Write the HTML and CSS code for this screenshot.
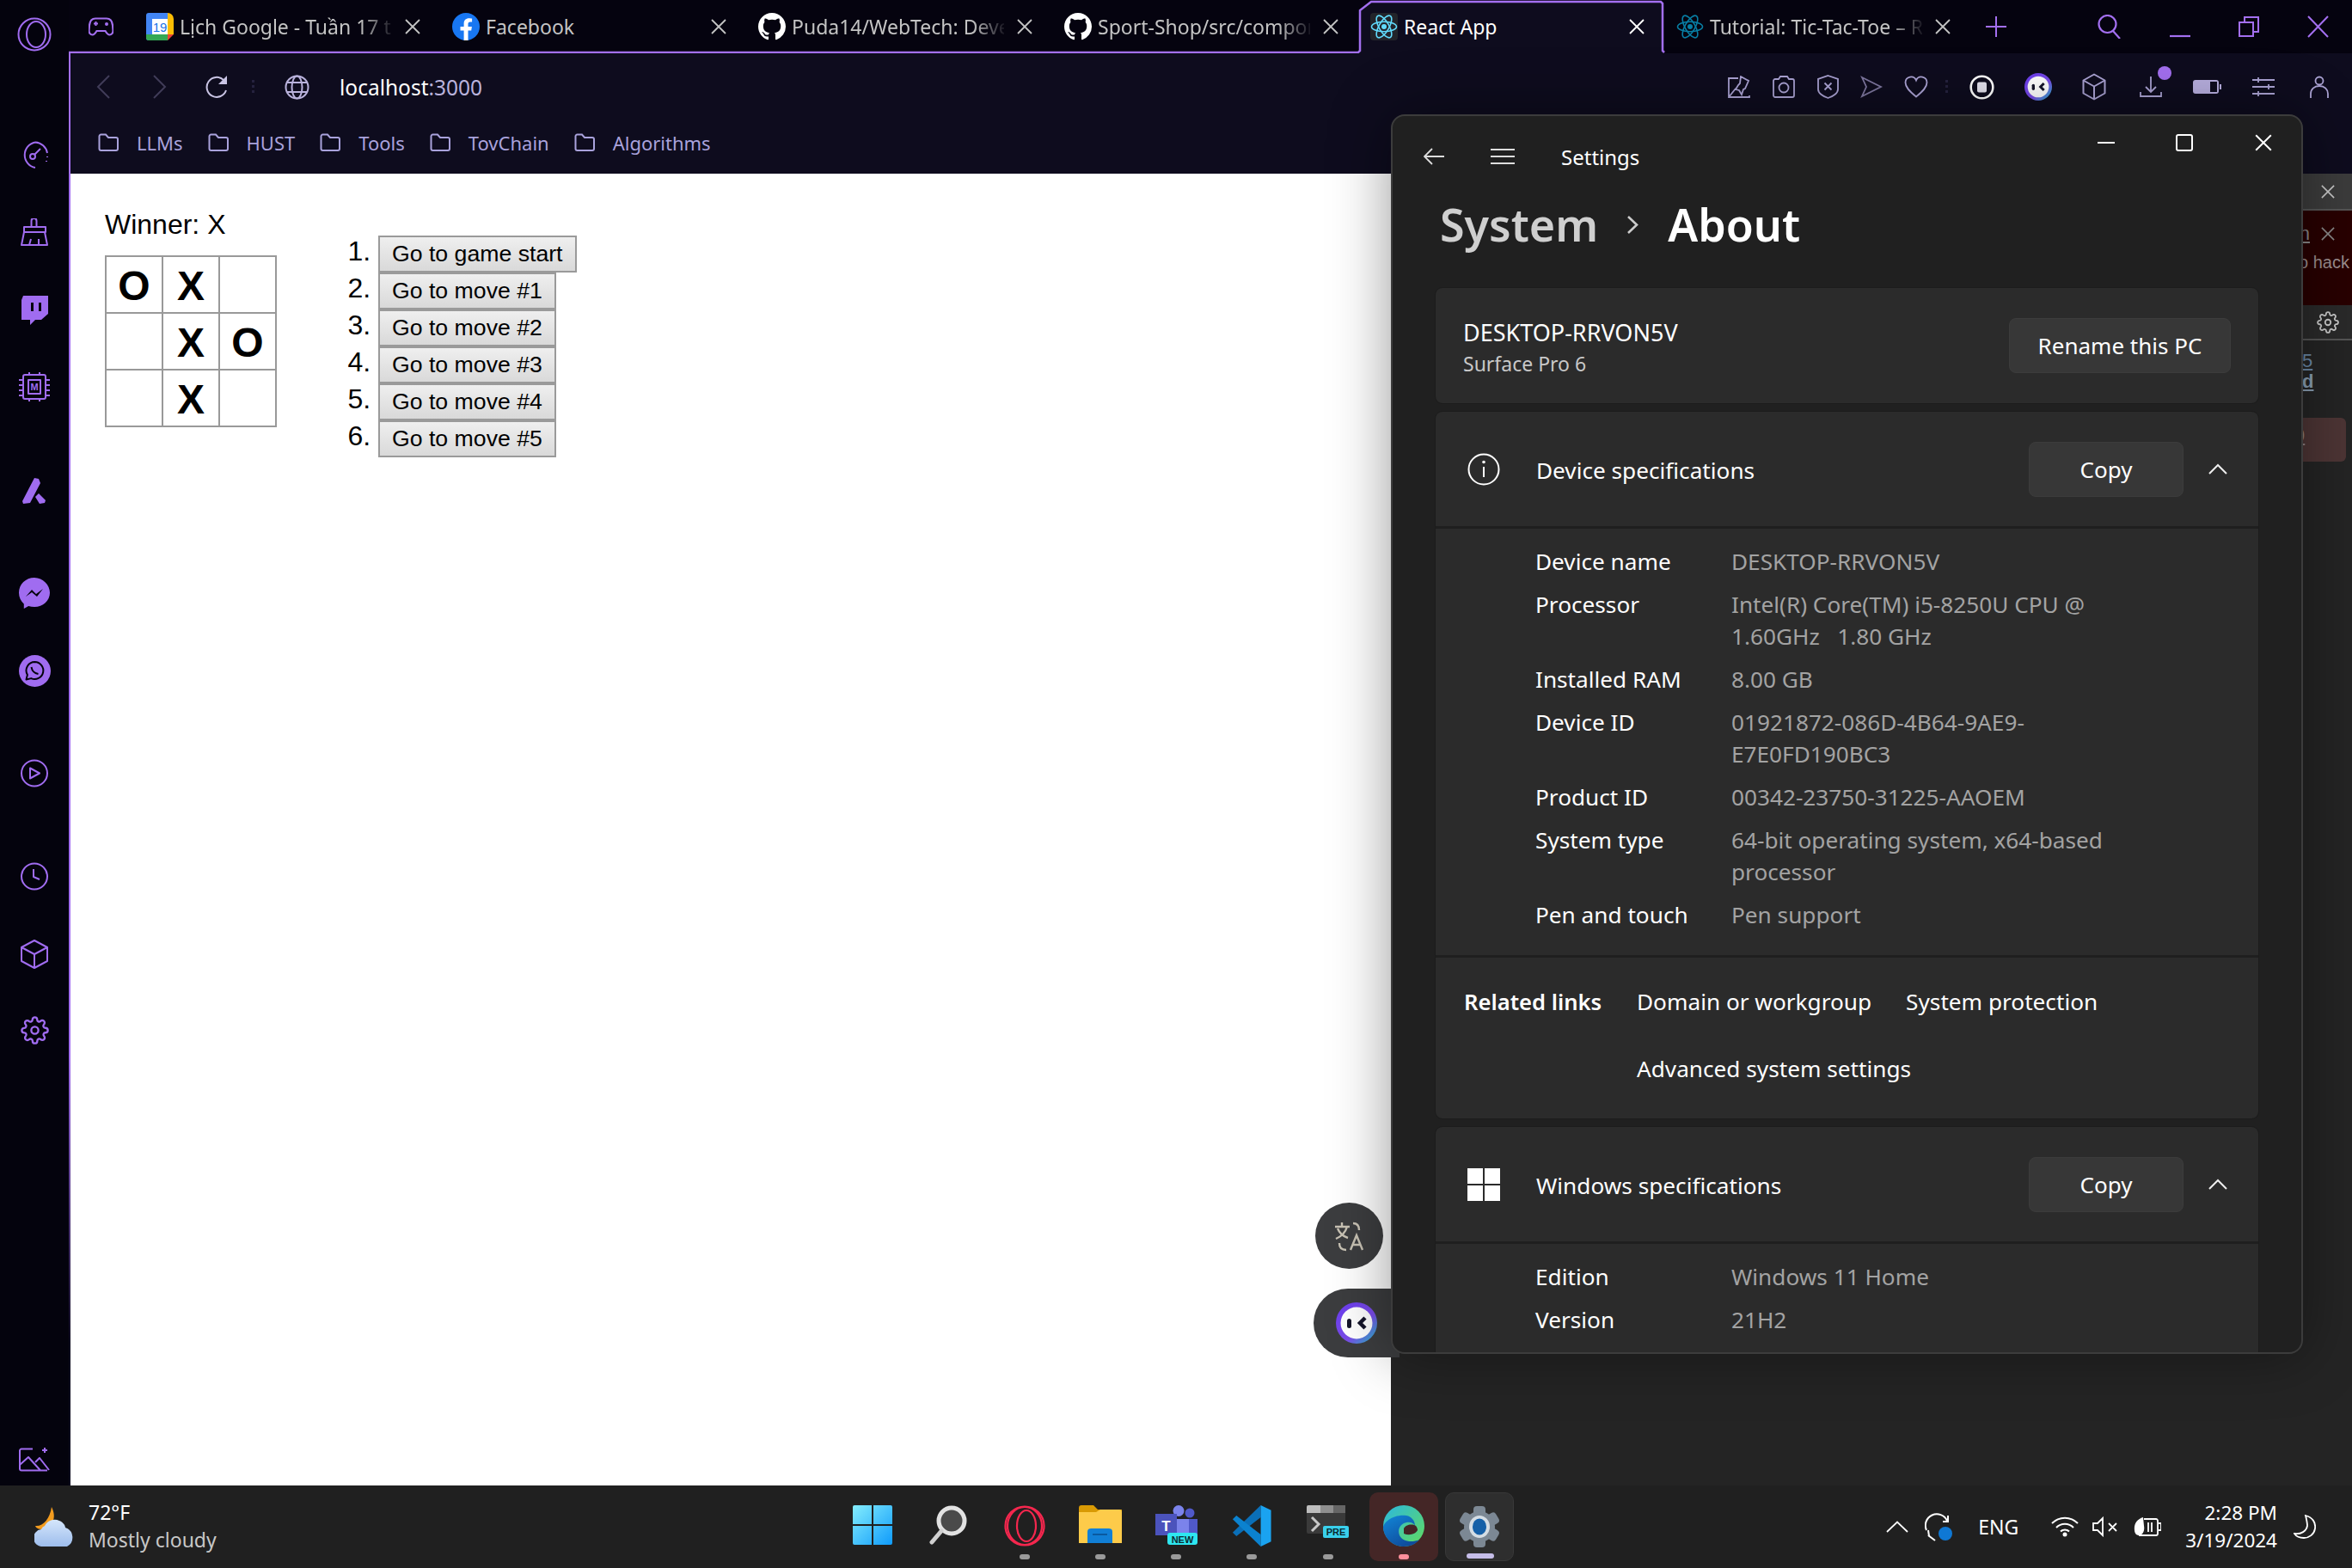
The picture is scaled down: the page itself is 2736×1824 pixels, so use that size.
FILE: index.html
```html
<!DOCTYPE html>
<html lang="en">
<head>
    <meta charset="UTF-8">
    <title>React App</title>
    <link rel="stylesheet" href="styles.css">
</head>
<body>

<svg class="defs" width="0" height="0">
    <symbol id="x" viewBox="0 0 20 18"><path d="M2 1l16 16M18 1L2 17" fill="none" stroke="currentColor" stroke-width="1.8"/></symbol>
    <symbol id="folder" viewBox="0 0 24 22"><path d="M1.5 3.5a2 2 0 0 1 2-2h5.5l3 3.5h9a2 2 0 0 1 2 2v11a2 2 0 0 1-2 2h-17.500a2 2 0 0 1-2-2z" fill="none" stroke="currentColor" stroke-width="2"/></symbol>
    <symbol id="github" viewBox="0 0 16 16"><path fill="#fff" d="M8 0C3.58 0 0 3.58 0 8c0 3.54 2.29 6.53 5.47 7.59.4.07.55-.17.55-.38 0-.19-.01-.82-.01-1.49-2.01.37-2.53-.49-2.69-.94-.09-.23-.48-.94-.82-1.13-.28-.15-.68-.52-.01-.53.63-.01 1.08.58 1.23.82.72 1.21 1.87.87 2.33.66.07-.52.28-.87.51-1.07-1.78-.2-3.64-.89-3.64-3.95 0-.87.31-1.59.82-2.15-.08-.2-.36-1.02.08-2.12 0 0 .67-.21 2.2.82.64-.18 1.32-.27 2-.27.68 0 1.36.09 2 .27 1.53-1.04 2.2-.82 2.2-.82.44 1.1.16 1.92.08 2.12.51.56.82 1.27.82 2.15 0 3.07-1.87 3.75-3.65 3.95.29.25.54.73.54 1.48 0 1.07-.01 1.93-.01 2.2 0 .21.15.46.55.38A8.013 8.013 0 0016 8c0-4.420-3.580-8-8-8z"/></symbol>
    <symbol id="atom" viewBox="0 0 32 32"><g fill="none" stroke="currentColor" stroke-width="1.6"><ellipse cx="16" cy="16" rx="14.500" ry="5.800"/><ellipse cx="16" cy="16" rx="14.500" ry="5.800" transform="rotate(60 16 16)"/><ellipse cx="16" cy="16" rx="14.500" ry="5.800" transform="rotate(120 16 16)"/></g><circle cx="16" cy="16" r="3" fill="currentColor"/></symbol>
    <symbol id="gear" viewBox="0 0 24 24"><g fill="none" stroke="currentColor" stroke-width="1.700" stroke-linejoin="round"><circle cx="12" cy="12" r="3"/><path d="M19.400 15a1.650 1.650 0 0 0 .33 1.820l.06.06a2 2 0 0 1 0 2.830 2 2 0 0 1-2.830 0l-.06-.06a1.650 1.650 0 0 0-1.820-.33 1.650 1.650 0 0 0-1 1.510V21a2 2 0 0 1-2 2 2 2 0 0 1-2-2v-.09A1.650 1.650 0 0 0 9 19.400a1.650 1.650 0 0 0-1.820.33l-.06.06a2 2 0 0 1-2.830 0 2 2 0 0 1 0-2.830l.06-.06a1.650 1.650 0 0 0 .33-1.820 1.650 1.650 0 0 0-1.510-1H3a2 2 0 0 1-2-2 2 2 0 0 1 2-2h.09A1.650 1.650 0 0 0 4.600 9a1.650 1.650 0 0 0-.33-1.820l-.06-.06a2 2 0 0 1 0-2.830 2 2 0 0 1 2.830 0l.06.06a1.650 1.650 0 0 0 1.820.33H9a1.650 1.650 0 0 0 1-1.510V3a2 2 0 0 1 2-2 2 2 0 0 1 2 2v.09a1.650 1.650 0 0 0 1 1.510 1.650 1.650 0 0 0 1.820-.33l.06-.06a2 2 0 0 1 2.830 0 2 2 0 0 1 0 2.830l-.06.06a1.650 1.650 0 0 0-.33 1.820V9a1.650 1.650 0 0 0 1.510 1H21a2 2 0 0 1 2 2 2 2 0 0 1-2 2h-.09a1.650 1.650 0 0 0-1.510 1z"/></g></symbol>
    <symbol id="cube" viewBox="0 0 28 32"><g fill="none" stroke="currentColor" stroke-width="2" stroke-linejoin="round"><path d="M14 1.500L26.500 8.500V23.500L14 30.500L1.500 23.500V8.500z"/><path d="M1.500 8.500L14 15.500L26.500 8.500M14 15.500V30.500"/></g></symbol>
    <symbol id="aria" viewBox="0 0 48 48"><defs><linearGradient id="ariaRim" x1="0" y1="0" x2="1" y2="1"><stop offset="0" stop-color="#6a3cf0"/><stop offset=".6" stop-color="#7a4ce8"/><stop offset="1" stop-color="#22c1c8"/></linearGradient></defs><circle cx="24" cy="24" r="24" fill="url(#ariaRim)"/><circle cx="24" cy="24" r="18.500" fill="#fff"/><rect x="13" y="19" width="5" height="11" rx="2.500" fill="#15152a"/><path d="M34 18l-6 6 6 6" fill="none" stroke="#15152a" stroke-width="4.500"/></symbol>
</svg>

<div class="desktop">
    <aside class="rail">
        <svg class="rail-opera" width="40" height="40" viewBox="0 0 40 40"><circle cx="20" cy="20" r="18.500"/><ellipse cx="22" cy="20" rx="11" ry="15"/></svg>
        <svg class="rail-speed" width="33" height="32" viewBox="0 0 33 32"><path d="M17 1.500A15 15 0 0 0 17 31M17 1.500A15 15 0 0 1 31 14"/><circle cx="14" cy="18" r="3"/><path d="M16 16l7-7M31 18v1M30 23v1"/></svg>
        <svg class="rail-brush" width="32" height="32" viewBox="0 0 32 32"><path d="M12.500 10V3a3 3 0 0 1 6 0v7M4 10h25v6H4zM4 16l-3 15h30l-3-15M10 31l2-7M21 31v-7"/></svg>
        <svg class="rail-twitch" width="32" height="34" viewBox="0 0 32 34"><path class="fill" d="M3 0H32V21L24 28H17L11 34V28H1V5z"/><rect class="cut" x="12" y="8" width="3" height="10"/><rect class="cut" x="21" y="8" width="3" height="10"/></svg>
        <svg class="rail-chip" width="38" height="34" viewBox="0 0 38 34"><rect x="6" y="3" width="26" height="28" rx="2"/><rect x="12" y="9" width="14" height="16"/><path d="M1 9h5M1 15h5M1 21h5M1 27h5M32 9h5M32 15h5M32 21h5M32 27h5M13 0v3M25 0v3M13 31v3M25 31v3"/><text x="19" y="21" class="chip-m">M</text></svg>
        <svg class="rail-a" width="30" height="32" viewBox="0 0 30 32"><path class="fill" d="M15 1l5 1 2 5L10 30l-8 1-1-3zM20 19l8 8-1 3-6 1-5-8z"/></svg>
        <svg class="rail-msg" width="36" height="36" viewBox="0 0 36 36"><path class="fill" d="M18 0C8 0 0 7.500 0 17.500c0 5.300 2.200 9.800 5.800 13V36l5.400-3c2.100.700 4.400 1 6.800 1 10 0 18-7.500 18-16.500S28 0 18 0z"/><path class="wave" d="M8 22l7-8 5 5 8-6-7 9-6-5z"/></svg>
        <svg class="rail-wa" width="37" height="37" viewBox="0 0 37 37"><circle class="fill" cx="18.500" cy="18.500" r="18.500"/><path class="bubble" d="M18.500 8a10 10 0 0 0-8.600 15L8.500 28.500l5.700-1.400A10 10 0 1 0 18.500 8z"/><path class="bubble" d="M14.500 14c1 5 3 7 8 8"/></svg>
        <svg class="rail-play" width="32" height="33" viewBox="0 0 32 33"><circle cx="16" cy="16.500" r="15"/><path d="M11 10.500l11 6-11 6z"/></svg>
        <svg class="rail-clock" width="32" height="33" viewBox="0 0 32 33"><circle cx="16" cy="16.500" r="15"/><path d="M15 8v9l7 3"/></svg>
        <svg class="rail-cube" width="32" height="34" viewBox="0 0 32 34"><path d="M16 1L31 9V25L16 33L1 25V9zM1 9L16 17L31 9M16 17V33"/></svg>
        <svg class="rail-gear" width="33" height="33"><use href="#gear"/></svg>
        <svg class="rail-gallery" width="36" height="28" viewBox="0 0 36 28"><path d="M16 1.500H3a2 2 0 0 0-2 2v21a2 2 0 0 0 2 2h30M1 20l10-9 14 15.500M19 17l5-5 11 14M27 3h6M30 0v6"/></svg>
    </aside>

    <div class="browser">
        <div class="tabstrip">
            <svg class="tab-outline" width="2656" height="62" viewBox="0 0 2656 62">
                <defs><linearGradient id="tabFade"><stop offset="0" stop-color="#a36ff0"/><stop offset="1" stop-color="#a36ff0" stop-opacity="0"/></linearGradient></defs>
                <path d="M1502 62V12L1515 2H1852L1854 4V62z" fill="#0e0c1e"/>
                <path d="M0 61H1500L1502 59V12L1515 2H1852L1854 4V59L1856 61" fill="none" stroke="#a36ff0" stroke-width="2.500"/>
                <path d="M1856 61H2240" fill="none" stroke="url(#tabFade)" stroke-width="2.500"/>
            </svg>
            <svg class="tab-game" width="29" height="22" viewBox="0 0 29 22"><path d="M8 1.500h13c4 0 6.500 3 7 8l.5 6c.2 3-2 5-4 5-2 0-3.500-2-5-4.500h-10c-1.500 2.500-3 4.500-5 4.500s-4.200-2-4-5l.5-6c.5-5 3-8 7-8z" fill="none" stroke="#a36ff0" stroke-width="2.200"/><path d="M6 7.500h5M8.500 5v5" stroke="#a36ff0" stroke-width="2"/><circle cx="21" cy="8" r="2" fill="#a36ff0"/></svg>
            <div class="tab">
                <svg width="32" height="32" viewBox="0 0 32 32"><path d="M3 0h22v32H3a3 3 0 0 1-3-3V3a3 3 0 0 1 3-3z" fill="#4285f4"/><path d="M25 0a7 7 0 0 1 7 7v18h-7z" fill="#fbbc04"/><path d="M0 25h25v7H3a3 3 0 0 1-3-3z" fill="#34a853"/><path d="M25 25h7l-7 7z" fill="#ea4335"/><rect x="7" y="7" width="18" height="18" fill="#fff"/><text x="16" y="22" class="cal-day">19</text></svg>
                <span class="tab-title fade">Lịch Google - Tuần 17 t</span>
                <svg class="tab-close" width="20" height="18"><use href="#x"/></svg>
            </div>
            <div class="tab">
                <svg width="32" height="32" viewBox="0 0 32 32"><circle cx="16" cy="16" r="16" fill="#1877f2"/><path d="M22.200 20.600l.7-4.600h-4.400v-3c0-1.300.6-2.500 2.600-2.500h2V6.600s-1.800-.3-3.500-.3c-3.600 0-6 2.200-6 6.200V16H9.500v4.600h4.100V32h4.900V20.600z" fill="#fff"/></svg>
                <span class="tab-title">Facebook</span>
                <svg class="tab-close" width="20" height="18"><use href="#x"/></svg>
            </div>
            <div class="tab">
                <svg width="32" height="32"><use href="#github"/></svg>
                <span class="tab-title fade">Puda14/WebTech: Deve</span>
                <svg class="tab-close" width="20" height="18"><use href="#x"/></svg>
            </div>
            <div class="tab">
                <svg width="32" height="32"><use href="#github"/></svg>
                <span class="tab-title fade">Sport-Shop/src/compon</span>
                <svg class="tab-close" width="20" height="18"><use href="#x"/></svg>
            </div>
            <div class="tab tab-active">
                <svg class="tile-react" width="32" height="32"><use href="#atom"/></svg>
                <span class="tab-title">React App</span>
                <svg class="tab-close" width="20" height="18"><use href="#x"/></svg>
            </div>
            <div class="tab">
                <svg class="tile-tutorial" width="32" height="32"><use href="#atom"/></svg>
                <span class="tab-title fade">Tutorial: Tic-Tac-Toe – R</span>
                <svg class="tab-close" width="20" height="18"><use href="#x"/></svg>
            </div>
            <svg class="tab-plus" width="24" height="24" viewBox="0 0 24 24"><path d="M12 0v24M0 12h24" stroke="#a36ff0" stroke-width="2"/></svg>
            <div class="win-buttons">
                <svg width="28" height="28" viewBox="0 0 28 28"><circle cx="11.500" cy="11" r="10" fill="none" stroke="#a36ff0" stroke-width="2.200"/><path d="M18 19l8 9" stroke="#a36ff0" stroke-width="2.200"/></svg>
                <svg width="24" height="26" viewBox="0 0 24 26"><path d="M0 24h24" stroke="#a36ff0" stroke-width="2.200"/></svg>
                <svg width="24" height="24" viewBox="0 0 24 24"><path d="M7 6V1h16v17h-6M1 7h16v16H1z" fill="none" stroke="#a36ff0" stroke-width="2"/></svg>
                <svg width="25" height="26" viewBox="0 0 25 26"><path d="M1 1l23 24M24 1L1 25" stroke="#a36ff0" stroke-width="2"/></svg>
            </div>
        </div>

        <div class="chrome">
            <div class="toolbar">
                <svg class="nav-back" width="16" height="28" viewBox="0 0 16 28"><path d="M15 1L2 14l13 13" fill="none" stroke="#403c58" stroke-width="2"/></svg>
                <svg class="nav-forward" width="16" height="28" viewBox="0 0 16 28"><path d="M1 1l13 13L1 27" fill="none" stroke="#403c58" stroke-width="2"/></svg>
                <svg class="nav-reload" width="28" height="26" viewBox="0 0 28 26"><path d="M22 5A11.500 11.500 0 1 0 25 17" fill="none" stroke="#c9c4e4" stroke-width="2"/><path d="M26 0v10H16z" fill="#c9c4e4"/></svg>
                <span class="tool-dots"></span>
                <svg class="nav-globe" width="29" height="29" viewBox="0 0 29 29"><g fill="none" stroke="#b9b2dc" stroke-width="2"><circle cx="14.500" cy="14.500" r="13"/><ellipse cx="14.500" cy="14.500" rx="6" ry="13"/><path d="M3 9h23M3 20h23"/></g></svg>
                <span class="address"><b>localhost</b>:3000</span>
                <div class="tools">
                    <span class="tool"><svg width="26" height="26" viewBox="0 0 26 26"><path d="M12 3H1v22h24v-2M1 25l8-10M15 1l9 5-4 9-2 1-2 6-3-5-4-1 3-5 2-2z" fill="none" stroke="#aba3d4" stroke-width="1.800"/></svg></span>
                    <span class="tool"><svg width="26" height="26" viewBox="0 0 26 26"><path d="M1 6a2 2 0 0 1 2-2h4l2-3h8l2 3h4a2 2 0 0 1 2 2v17a2 2 0 0 1-2 2H3a2 2 0 0 1-2-2z" fill="none" stroke="#aba3d4" stroke-width="1.800"/><circle cx="13" cy="14" r="5.500" fill="none" stroke="#aba3d4" stroke-width="1.800"/></svg></span>
                    <span class="tool"><svg width="25" height="28" viewBox="0 0 25 28"><path d="M12.500 1L24 5v12c0 4-5 8-11.500 10C6 25 1 21 1 17V5zM8.500 9.500l8 8M16.500 9.500l-8 8" fill="none" stroke="#aba3d4" stroke-width="1.800"/></svg></span>
                    <span class="tool"><svg width="26" height="26" viewBox="0 0 26 26"><path d="M2 2l22 11L2 24l5-11z" fill="none" stroke="#7e779f" stroke-width="1.800"/></svg></span>
                    <span class="tool"><svg width="28" height="26" viewBox="0 0 28 26"><path d="M14 24.500C6 18 1.500 13.500 1.500 8A6.500 6.500 0 0 1 14 5.500 6.500 6.500 0 0 1 26.500 8c0 5.500-4.500 10-12.500 16.500z" fill="none" stroke="#aba3d4" stroke-width="1.800"/></svg></span>
                </div>
                <span class="tool-dots tool-dots-right"></span>
                <div class="tools tools-wide">
                    <span class="tool"><svg width="29" height="29" viewBox="0 0 29 29"><circle cx="14.500" cy="14.500" r="12.800" fill="none" stroke="#fff" stroke-width="2.600"/><rect x="9" y="8.500" width="11" height="12" rx="2" fill="#e4e2ee"/></svg></span>
                    <span class="tool"><svg width="32" height="32"><use href="#aria"/></svg></span>
                    <span class="tool"><svg class="tool-ink" width="28" height="32"><use href="#cube"/></svg></span>
                    <span class="tool badge-host"><svg width="26" height="26" viewBox="0 0 26 26"><path d="M13 1v18M7 13l6 6 6-6M1 19v5h24v-5" fill="none" stroke="#aba3d4" stroke-width="1.800"/></svg><i class="dl-dot"></i></span>
                    <span class="tool"><svg width="33" height="16" viewBox="0 0 33 16"><rect x="0" y="0" width="30" height="16" rx="3" fill="#b7aede"/><rect x="20" y="2" width="8" height="12" fill="#0e0c1e"/><rect x="31" y="5" width="2" height="6" fill="#b7aede"/></svg></span>
                    <span class="tool"><svg width="26" height="22" viewBox="0 0 26 22"><path d="M0 3h26M0 11h26M0 19h26M7 0v6M19 8v6M7 16v6" stroke="#aba3d4" stroke-width="1.800"/></svg></span>
                    <span class="tool"><svg width="22" height="26" viewBox="0 0 22 26"><circle cx="11" cy="6" r="4.500" fill="none" stroke="#aba3d4" stroke-width="1.800"/><path d="M1 26v-5c0-5 4-9 10-9s10 4 10 9v5" fill="none" stroke="#aba3d4" stroke-width="1.800"/></svg></span>
                </div>
            </div>

            <div class="bookmarks">
                <div class="bookmark"><svg width="24" height="22"><use href="#folder"/></svg>LLMs</div>
                <div class="bookmark"><svg width="24" height="22"><use href="#folder"/></svg>HUST</div>
                <div class="bookmark"><svg width="24" height="22"><use href="#folder"/></svg>Tools</div>
                <div class="bookmark"><svg width="24" height="22"><use href="#folder"/></svg>TovChain</div>
                <div class="bookmark"><svg width="24" height="22"><use href="#folder"/></svg>Algorithms</div>
            </div>

            <div class="viewport">
                <main class="page">
                    <div class="game">
                        <div class="game-board">
                            <div class="status">Winner: X</div>
                            <div class="board-row"><button class="square">O</button><button class="square">X</button><button class="square"></button></div>
                            <div class="board-row"><button class="square"></button><button class="square">X</button><button class="square">O</button></div>
                            <div class="board-row"><button class="square"></button><button class="square">X</button><button class="square"></button></div>
                        </div>
                        <ol class="game-info">
                            <li><button class="move">Go to game start</button></li>
                            <li><button class="move">Go to move #1</button></li>
                            <li><button class="move">Go to move #2</button></li>
                            <li><button class="move">Go to move #3</button></li>
                            <li><button class="move">Go to move #4</button></li>
                            <li><button class="move">Go to move #5</button></li>
                        </ol>
                    </div>
                </main>
                <div class="devtools">
                    <div class="dev-top"><svg width="18" height="16" viewBox="0 0 20 18"><use href="#x"/></svg></div>
                    <div class="dev-error">
                        <div class="dev-error-first"><u>n</u><svg width="18" height="16" viewBox="0 0 20 18"><use href="#x"/></svg></div>
                        <div class="dev-error-text">o hack</div>
                    </div>
                    <div class="dev-gear"><svg width="26" height="26"><use href="#gear"/></svg></div>
                    <div class="dev-body">
                        <div class="dev-link">5</div>
                        <div class="dev-link dev-bold">d</div>
                        <div class="dev-pill"><u>9</u></div>
                    </div>
                </div>
            </div>
        </div>
    </div>

    <button class="float-translate"><svg width="36" height="36" viewBox="0 0 36 36"><g fill="none" stroke="#c8c2b4" stroke-width="2.400"><path d="M1 7h17M9 2v5M15 7c-2 7-6 11-13 14M4 9c2 5 6 9 12 11M22 3c4 0 7 2 7 8M14 34c-6 0-8-3-8-8"/><path d="M19 34l7-17 7 17M21.500 28h9"/></g></svg></button>
    <button class="float-aria"><svg width="48" height="48"><use href="#aria"/></svg></button>

    <section class="settings">
        <div class="settings-bar">
            <svg class="set-back" width="24" height="20" viewBox="0 0 24 20"><path d="M10 1L1 10l9 9M1 10h23" fill="none" stroke="#ddd" stroke-width="1.800"/></svg>
            <svg class="set-menu" width="28" height="20" viewBox="0 0 28 20"><path d="M0 2h28M0 10h28M0 18h28" stroke="#ddd" stroke-width="2"/></svg>
            <span class="set-name">Settings</span>
            <div class="set-controls">
                <svg width="20" height="20" viewBox="0 0 20 20"><path d="M0 10h20" stroke="#fff" stroke-width="2"/></svg>
                <svg width="20" height="20" viewBox="0 0 20 20"><rect x="1" y="1" width="18" height="18" rx="2" fill="none" stroke="#fff" stroke-width="2"/></svg>
                <svg width="22" height="20"><use href="#x"/></svg>
            </div>
        </div>
        <h1 class="set-title"><span class="crumb">System</span><svg width="15" height="21" viewBox="0 0 15 21"><path d="M2 1l10 9.500L2 20" fill="none" stroke="#ccc" stroke-width="2.600"/></svg><span>About</span></h1>
        <div class="set-scroll">
            <div class="card card-pc">
                <div class="pc-name">
                    <div class="pc-host">DESKTOP-RRVON5V</div>
                    <div class="pc-model">Surface Pro 6</div>
                </div>
                <button class="set-btn btn-rename">Rename this PC</button>
            </div>

            <div class="card">
                <div class="spec-head">
                    <svg class="spec-icon" width="40" height="38" viewBox="0 0 40 38"><circle cx="20" cy="19" r="17.500" fill="none" stroke="#fff" stroke-width="2"/><path d="M20 16v12" stroke="#fff" stroke-width="2"/><circle cx="20" cy="10.500" r="1.800" fill="#fff"/></svg>
                    <span class="spec-title">Device specifications</span>
                    <button class="set-btn btn-copy">Copy</button>
                    <svg class="spec-chevron" width="22" height="13" viewBox="0 0 22 13"><path d="M1 12L11 2l10 10" fill="none" stroke="#eee" stroke-width="2"/></svg>
                </div>
                <div class="spec-body">
                    <div class="spec-row"><span>Device name</span><span class="spec-val">DESKTOP-RRVON5V</span></div>
                    <div class="spec-row"><span>Processor</span><span class="spec-val">Intel(R) Core(TM) i5-8250U CPU @<br>1.60GHz &nbsp; 1.80 GHz</span></div>
                    <div class="spec-row"><span>Installed RAM</span><span class="spec-val">8.00 GB</span></div>
                    <div class="spec-row"><span>Device ID</span><span class="spec-val">01921872-086D-4B64-9AE9-<br>E7E0FD190BC3</span></div>
                    <div class="spec-row"><span>Product ID</span><span class="spec-val">00342-23750-31225-AAOEM</span></div>
                    <div class="spec-row"><span>System type</span><span class="spec-val">64-bit operating system, x64-based<br>processor</span></div>
                    <div class="spec-row"><span>Pen and touch</span><span class="spec-val">Pen support</span></div>
                </div>
                <div class="related">
                    <b class="related-label">Related links</b>
                    <div class="related-links">
                        <span>Domain or workgroup</span>
                        <span>System protection</span>
                        <span>Advanced system settings</span>
                    </div>
                </div>
            </div>

            <div class="card">
                <div class="spec-head">
                    <svg class="spec-icon" width="40" height="40" viewBox="0 0 40 40"><path d="M1 1h18v18H1zM21 1h18v18H21zM1 21h18v18H1zM21 21h18v18H21z" fill="#fff"/></svg>
                    <span class="spec-title">Windows specifications</span>
                    <button class="set-btn btn-copy">Copy</button>
                    <svg class="spec-chevron" width="22" height="13" viewBox="0 0 22 13"><path d="M1 12L11 2l10 10" fill="none" stroke="#eee" stroke-width="2"/></svg>
                </div>
                <div class="spec-body">
                    <div class="spec-row"><span>Edition</span><span class="spec-val">Windows 11 Home</span></div>
                    <div class="spec-row"><span>Version</span><span class="spec-val">21H2</span></div>
                </div>
            </div>
        </div>
    </section>
</div>

<footer class="taskbar">
    <div class="weather">
        <svg width="48" height="46" viewBox="0 0 48 46">
            <defs><linearGradient id="cloud" x1="0" y1="0" x2="0" y2="1"><stop offset="0" stop-color="#d5e6fb"/><stop offset="1" stop-color="#9dbdec"/></linearGradient></defs>
            <path d="M20 0c3 6 4 12 1 18-2 5-7 8-12 8-3 0-7-1-8-4 9 1 17-8 19-22z" fill="#f39c1f"/>
            <path d="M10 46a10 10 0 0 1-2-20 8 8 0 0 1 4-4 13 13 0 0 1 17-6c5 2 7 6 7 8a12 12 0 0 1 2 22z" fill="url(#cloud)"/>
        </svg>
        <div class="weather-text">
            <div>72°F</div>
            <div class="weather-sub">Mostly cloudy</div>
        </div>
    </div>

    <div class="apps">
        <div class="app">
            <svg width="46" height="46" viewBox="0 0 46 46"><defs><linearGradient id="start" x1="0" y1="0" x2="1" y2="1"><stop offset="0" stop-color="#84edfd"/><stop offset="1" stop-color="#0f9bfb"/></linearGradient></defs><path d="M0 2a2 2 0 0 1 2-2h20v22H0zM24 0h20a2 2 0 0 1 2 2v20H24zM0 24h22v22H2a2 2 0 0 1-2-2zM24 24h22v20a2 2 0 0 1-2 2H24z" fill="url(#start)"/></svg>
        </div>
        <div class="app">
            <svg width="44" height="46" viewBox="0 0 44 46"><circle cx="26" cy="18" r="15" fill="#4a4a4a" stroke="#e2e2e2" stroke-width="5"/><path d="M14 30L3 43" stroke="#d0d0d0" stroke-width="5" stroke-linecap="round"/></svg>
        </div>
        <div class="app">
            <svg width="48" height="48" viewBox="0 0 48 48"><g fill="none" stroke="#f5274e" stroke-width="2.200"><circle cx="24" cy="24" r="22.500"/><ellipse cx="24" cy="24" rx="20" ry="22"/><ellipse cx="26" cy="24" rx="11" ry="18"/></g></svg>
            <i class="app-dot"></i>
        </div>
        <div class="app">
            <svg width="50" height="44" viewBox="0 0 50 44"><path d="M0 3a3 3 0 0 1 3-3h14l5 5h28v8H0z" fill="#d99a04"/><path d="M0 8h20l5-3h22a3 3 0 0 1 3 3v36H0z" fill="#fdcb4a"/><path d="M10 44V31a4 4 0 0 1 4-4h21a4 4 0 0 1 4 4v13z" fill="#117fd6"/><path d="M16 34h17" stroke="#0a5aa0" stroke-width="2"/></svg>
            <i class="app-dot"></i>
        </div>
        <div class="app">
            <svg width="49" height="46" viewBox="0 0 49 46"><circle cx="27" cy="6.500" r="6.500" fill="#7b83eb"/><circle cx="40" cy="9" r="5.500" fill="#5059c9"/><path d="M34 16h15v22H34z" fill="#5059c9"/><path d="M18 16h21v26H18z" fill="#7b83eb"/><rect y="10" width="25" height="25" fill="#4b53bc"/><text x="12.500" y="30" class="teams-t">T</text><rect x="14" y="32" width="35" height="14" rx="3" fill="#2ee6f0"/><text x="31.500" y="43.500" class="app-tag">NEW</text></svg>
            <i class="app-dot"></i>
        </div>
        <div class="app">
            <svg width="49" height="48" viewBox="0 0 100 100"><path d="M3 66l9 9 59-46V0z" fill="#0a6fb8"/><path d="M3 34l9-9 59 46v29z" fill="#0b82cf"/><path d="M71 0l25 12v76l-25 12z" fill="#1aa3f0"/></svg>
            <i class="app-dot"></i>
        </div>
        <div class="app">
            <svg width="49" height="38" viewBox="0 0 49 38"><rect width="45" height="33" rx="2" fill="#3a3a3a"/><path d="M0 2a2 2 0 0 1 2-2h14v9H0z" fill="#bdbdbd"/><rect x="16" width="15" height="9" fill="#8f8f8f"/><rect x="31" width="14" height="9" fill="#666"/><path d="M6 14l8 8-8 8" fill="none" stroke="#c8c8c8" stroke-width="3"/><rect x="19" y="24" width="30" height="14" rx="2" fill="#39d0ec"/><text x="34" y="35" class="app-tag">PRE</text></svg>
            <i class="app-dot"></i>
        </div>
        <div class="app app-edge">
            <svg width="48" height="48" viewBox="0 0 48 48">
                <defs><linearGradient id="edgeTop" x1="0" y1="0" x2="1" y2="1"><stop offset="0" stop-color="#2bb7e0"/><stop offset="1" stop-color="#62dc5c"/></linearGradient><linearGradient id="edgeLow" x1="0" y1="0" x2=".6" y2="1"><stop offset="0" stop-color="#1187d8"/><stop offset="1" stop-color="#0f4c9c"/></linearGradient></defs>
                <circle cx="24" cy="24" r="24" fill="url(#edgeTop)"/>
                <path d="M27 12C12 10 0 20 0 26c1 13 12 22 24 22 8 0 14-3 18-8-9 4-20 2-23-5-3-8 2-14 8-15 5-1 9 1 10 4 0-6-4-11-10-12z" fill="url(#edgeLow)"/>
                <path d="M24 27c2-4 9-6 14-3 1 1 2 3 2 5-2 4-9 7-16 4z" fill="#442626"/>
            </svg>
            <i class="app-dot dot-edge"></i>
        </div>
        <div class="app app-settings">
            <svg width="48" height="48" viewBox="0 0 48 48"><g fill="#7c8894"><rect x="17" y="0" width="14" height="48" rx="4"/><rect x="17" y="0" width="14" height="48" rx="4" transform="rotate(60 24 24)"/><rect x="17" y="0" width="14" height="48" rx="4" transform="rotate(120 24 24)"/><circle cx="24" cy="24" r="18"/></g><ellipse cx="24" cy="24" rx="12" ry="13" fill="#d5dde4"/><ellipse cx="24" cy="24" rx="8" ry="9.500" fill="#1560a8"/></svg>
            <i class="app-dot dot-active"></i>
        </div>
    </div>

    <div class="tray">
        <svg class="tray-up" width="26" height="14" viewBox="0 0 26 14"><path d="M1 13L13 1.500 25 13" fill="none" stroke="#fff" stroke-width="1.800"/></svg>
        <svg class="tray-sync" width="32" height="33" viewBox="0 0 32 33"><path d="M2 20A13 13 0 0 1 26 9M21 10h6V3M5 27l-1-7" fill="none" stroke="#fff" stroke-width="2"/><path d="M4 26l8 6" fill="none" stroke="#fff" stroke-width="2"/><circle cx="24" cy="24" r="8" fill="#0f78d4"/></svg>
        <span class="tray-lang">ENG</span>
        <svg class="tray-wifi" width="32" height="24" viewBox="0 0 32 24"><g fill="none" stroke="#fff" stroke-width="2"><path d="M1 8a21 21 0 0 1 30 0M6 13a14 14 0 0 1 20 0M11 17.500a7 7 0 0 1 10 0"/></g><circle cx="16" cy="21" r="2.500" fill="#fff"/></svg>
        <svg class="tray-sound" width="30" height="24" viewBox="0 0 30 24"><path d="M1 8h5l6-6v20l-6-6H1zM19 8l9 9M28 8l-9 9" fill="none" stroke="#fff" stroke-width="1.800"/></svg>
        <svg class="tray-power" width="32" height="24" viewBox="0 0 32 24"><path d="M6 22h20a2 2 0 0 0 2-2V5a2 2 0 0 0-2-2H12M17 7v11M21 7v11M29 8h3v8h-3" fill="none" stroke="#fff" stroke-width="1.800"/><path d="M11 1C4 3 0 9 1 16c0 3 2 6 5 6 5 0 7-6 6-11z" fill="#fff"/></svg>
        <div class="clock">
            <div>2:28 PM</div>
            <div>3/19/2024</div>
        </div>
        <svg class="tray-moon" width="26" height="28" viewBox="0 0 26 28"><path d="M14 1c8 2 12 8 11 15-1 7-7 11-13 11-5 0-9-2-11-5 8 1 14-3 15-9 0-4-1-8-2-12z" fill="none" stroke="#fff" stroke-width="1.800"/></svg>
    </div>
</footer>

</body>
</html>
```

FILE: styles.css
```css
* {
    box-sizing: border-box;
}
body {
    margin: 0;
    width: 2736px;
    height: 1824px;
    overflow: hidden;
    background: #202020;
    font-family: "Noto Sans", "Open Sans", sans-serif;
    color: #fff;
    display: flex;
    flex-direction: column;
}
button {
    font-family: inherit;
}
.defs {
    position: absolute;
}
.desktop {
    position: relative;
    height: 1728px;
    display: flex;
}

/* left rail */
.rail {
    width: 80px;
    flex: none;
    background: #04030d;
    display: flex;
    flex-direction: column;
    align-items: center;
}
.rail svg {
    flex: none;
    fill: none;
    stroke: #a06cf0;
    stroke-width: 2;
    stroke-linejoin: round;
}
.rail svg .fill {
    fill: #a06cf0;
    stroke: none;
}
.rail svg .cut {
    fill: #04030d;
    stroke: none;
}
.rail svg .wave {
    fill: #04030d;
    stroke: none;
}
.rail svg .bubble {
    stroke: #04030d;
}
.chip-m {
    font: bold 11px "Liberation Sans", sans-serif;
    fill: #a06cf0;
    stroke: none;
    text-anchor: middle;
}
.rail-opera { margin-top: 20px; }
.rail-speed { margin-top: 104px; }
.rail-brush { margin-top: 58px; }
.rail-twitch { margin-top: 58px; }
.rail-chip { margin-top: 55px; }
.rail-a { margin-top: 88px; }
.rail-msg { margin-top: 85px; }
.rail-wa { margin-top: 54px; }
.rail-play { margin-top: 84px; }
.rail-clock { margin-top: 87px; }
.rail-cube { margin-top: 57px; }
.rail-gear { margin-top: 55px; color: #a06cf0; }
.rail-gallery { margin-top: auto; margin-bottom: 16px; }

/* browser */
.browser {
    flex: 1;
    min-width: 0;
    display: flex;
    flex-direction: column;
    background: #05030f;
}
.tabstrip {
    position: relative;
    height: 62px;
    flex: none;
    display: flex;
    align-items: center;
}
.tab-outline {
    position: absolute;
    left: 0;
    top: 0;
}
.tab-game {
    position: relative;
    margin-left: 23px;
    margin-right: 38px;
}
.tab {
    position: relative;
    width: 320px;
    margin-right: 36px;
    display: flex;
    align-items: center;
    gap: 7px;
    font-size: 23px;
    color: #c4c4c4;
}
.tab svg {
    flex: none;
}
.tab-title {
    flex: 1;
    overflow: hidden;
    white-space: nowrap;
}
.fade {
    -webkit-mask-image: linear-gradient(to right, #000 85%, rgba(0, 0, 0, 0.1) 100%);
    mask-image: linear-gradient(to right, #000 85%, rgba(0, 0, 0, 0.1) 100%);
}
.tab-close {
    color: #c4c4c4;
    margin-left: 7px;
}
.tab-active {
    color: #fff;
}
.tab-active .tab-close {
    color: #fff;
}
.tile-react {
    background: #22242a;
    border-radius: 4px;
    color: #61dafb;
}
.tile-tutorial {
    color: #087ea4;
}
.tab-plus {
    position: relative;
    margin-left: 4px;
}
.win-buttons {
    margin-left: auto;
    margin-right: 27px;
    display: flex;
    align-items: center;
    gap: 56px;
}

.chrome {
    flex: 1;
    min-height: 0;
    display: flex;
    flex-direction: column;
    background: #0e0c1e;
    border-left: 2px solid;
    border-image: linear-gradient(#a36ff0 70%, #0e0c1e 90%) 1;
}
.toolbar {
    height: 78px;
    flex: none;
    display: flex;
    align-items: center;
}
.nav-back { margin-left: 30px; }
.nav-forward { margin-left: 50px; }
.nav-reload { margin-left: 44px; }
.tool-dots {
    width: 3px;
    height: 16px;
    margin-left: 27px;
    background: repeating-linear-gradient(#25223e 0 3px, transparent 3px 6px);
}
.nav-globe { margin-left: 35px; }
.address {
    margin-left: 35px;
    font-size: 24.5px;
    color: #b9b2dc;
}
.address b {
    font-weight: 400;
    color: #fff;
}
.tools {
    display: flex;
    margin-left: auto;
}
.tool {
    position: relative;
    width: 51.4px;
    height: 40px;
    display: flex;
    align-items: center;
    justify-content: center;
}
.tool-dots-right {
    margin-left: 8px;
    margin-right: 7px;
}
.tools-wide {
    margin-left: 0;
    margin-right: 5px;
}
.tools-wide .tool {
    width: 65.5px;
}
.tool-ink {
    color: #aba3d4;
}
.dl-dot {
    position: absolute;
    right: 9px;
    top: -4px;
    width: 16px;
    height: 16px;
    border-radius: 50%;
    background: #a36ff0;
}
.bookmarks {
    height: 62px;
    flex: none;
    padding: 0 0 11px 32px;
    display: flex;
    align-items: center;
    gap: 29px;
}
.bookmark {
    display: flex;
    align-items: center;
    gap: 21px;
    font-size: 22px;
    color: #a9a2dc;
}

/* page area */
.viewport {
    flex: 1;
    min-height: 0;
    display: flex;
}
.page {
    width: 1536px;
    flex: none;
    background: #fff;
    color: #000;
    font-family: "Liberation Sans", Arial, sans-serif;
    padding: 41px 40px;
    font-size: 32px;
}
.game {
    display: flex;
}
.status {
    height: 56px;
    line-height: 36px;
}
.board-row {
    display: flex;
}
.square {
    width: 68px;
    height: 68px;
    margin: -2px -2px 0 0;
    padding: 0;
    background: #fff;
    border: 2px solid #999;
    font-family: "Liberation Sans", Arial, sans-serif;
    font-size: 48px;
    font-weight: bold;
    line-height: 68px;
    text-align: center;
    color: #000;
}
.game-info {
    margin: 31px 0 0 40px;
    padding-left: 80px;
    line-height: 36px;
}
.game-info li {
    height: 43px;
}
.move {
    height: 43px;
    padding: 0 14px;
    font-family: "Liberation Sans", Arial, sans-serif;
    font-size: 26.67px;
    color: #000;
    background: linear-gradient(#efefef, #d9d9d9);
    border: 2px solid #9a9a9a;
    vertical-align: top;
}

/* panel behind the settings window */
.devtools {
    flex: 1;
    min-width: 0;
    background: #242424;
    display: flex;
    flex-direction: column;
    font-family: "Liberation Sans", Arial, sans-serif;
    color: #c8c8c8;
}
.dev-top {
    height: 43px;
    background: #3c3c3c;
    border-bottom: 2px solid #555;
    display: flex;
    align-items: center;
    justify-content: flex-end;
    padding-right: 19px;
}
.dev-error {
    height: 110px;
    background: #280000;
    padding: 0 3px 0 0;
}
.dev-error-first {
    height: 48px;
    padding-top: 6px;
    display: flex;
    align-items: center;
    justify-content: flex-end;
    gap: 12px;
    padding-right: 16px;
    font-size: 22px;
    color: #8a8a8a;
}
.dev-error-text {
    text-align: right;
    font-size: 20px;
    line-height: 24px;
    color: #9d8f8f;
}
.dev-gear {
    height: 41px;
    background: #2a2a2a;
    border-bottom: 2px solid #555;
    display: flex;
    align-items: center;
    justify-content: flex-end;
    padding-right: 15px;
}
.dev-body {
    padding-top: 12px;
}
.dev-link {
    padding-left: 1060px;
    font-size: 22px;
    line-height: 24px;
    color: #6d8aa8;
    text-decoration: underline;
}
.dev-bold {
    font-weight: bold;
    color: #8ba0b4;
}
.dev-pill {
    margin: 30px 7px 0 auto;
    width: 60px;
    height: 51px;
    padding-top: 8px;
    border-radius: 6px;
    background: #4d3535;
    font-size: 22px;
    color: #8f8080;
}
.float-translate {
    position: absolute;
    left: 1530px;
    top: 1399px;
    width: 79px;
    height: 77px;
    padding: 0;
    border: none;
    border-radius: 50%;
    background: #3c3d3f;
    display: flex;
    align-items: center;
    justify-content: center;
}
.float-aria {
    position: absolute;
    left: 1528px;
    top: 1499px;
    width: 100px;
    height: 80px;
    padding: 0 0 0 26px;
    border: none;
    border-radius: 40px 0 0 40px;
    background: #3c3d3f;
    display: flex;
    align-items: center;
}

/* settings window */
.settings {
    position: absolute;
    left: 1618px;
    top: 133px;
    width: 1061px;
    height: 1442px;
    display: flex;
    flex-direction: column;
    overflow: hidden;
    background: #202020;
    border: 2px solid #3c3c3c;
    border-radius: 16px;
    box-shadow: 0 0 70px rgba(0, 0, 0, 0.4);
    font-size: 26.2px;
}
.settings-bar {
    height: 102px;
    flex: none;
    display: flex;
    align-items: flex-start;
}
.set-back {
    margin: 37px 0 0 36px;
}
.set-menu {
    margin: 37px 0 0 54px;
}
.set-name {
    margin: 30px 0 0 54px;
    font-size: 24px;
    line-height: 36px;
}
.set-controls {
    margin-left: auto;
    margin-right: 33px;
    margin-top: 21px;
    display: flex;
    gap: 71px;
}
.set-title {
    margin: 0 0 50px;
    height: 48px;
    padding-left: 55px;
    display: flex;
    align-items: center;
    font-size: 52px;
    font-weight: 600;
    line-height: 48px;
}
.crumb {
    color: #cfcfcf;
}
.set-title svg {
    margin: 0 33px;
}
.set-scroll {
    width: 957px;
    margin-left: 50px;
    display: flex;
    flex-direction: column;
    gap: 10px;
}
.card {
    flex: none;
    background: #2b2b2b;
    border-radius: 8px;
    box-shadow: 0 0 0 1px #1c1c1c;
}
.card-pc {
    height: 134px;
    padding: 0 32px;
    display: flex;
    align-items: center;
    justify-content: space-between;
}
.pc-name {
    margin-top: 5px;
    line-height: 36px;
}
.pc-host {
    font-size: 27px;
}
.pc-model {
    font-size: 23px;
    color: #c8c8c8;
}
.set-btn {
    height: 64px;
    border: 1px solid #3c3c3c;
    border-radius: 8px;
    background: #373737;
    color: #fff;
    font-size: 26px;
}
.btn-rename {
    width: 258px;
}
.spec-head {
    height: 136px;
    padding: 0 36px;
    border-bottom: 3px solid #1f1f1f;
    display: flex;
    align-items: center;
}
.spec-icon {
    margin-right: 41px;
    flex: none;
}
.spec-title {
    flex: 1;
    padding-top: 2px;
}
.btn-copy {
    width: 180px;
}
.spec-chevron {
    margin-left: 29px;
    flex: none;
}
.spec-body {
    padding: 20px 0 28px 116px;
    display: flex;
    flex-direction: column;
    gap: 13px;
    border-bottom: 3px solid #1f1f1f;
    line-height: 37px;
}
.spec-row {
    display: grid;
    grid-template-columns: 228px 1fr;
}
.spec-val {
    color: #a3a3a3;
}
.related {
    height: 187px;
    padding: 33px 0 0 33px;
    display: flex;
    line-height: 37px;
}
.related-label {
    width: 201px;
    flex: none;
    font-size: 25.6px;
    font-weight: 600;
}
.related-links {
    width: 600px;
    display: flex;
    flex-wrap: wrap;
    align-content: flex-start;
    gap: 41px 40px;
}

/* taskbar */
.taskbar {
    height: 96px;
    flex: none;
    background: #202020;
    display: flex;
    align-items: flex-start;
}
.weather {
    width: 975px;
    flex: none;
    padding: 25px 0 0 40px;
    display: flex;
    gap: 15px;
}
.weather-text {
    margin-top: -10px;
    font-size: 23px;
    line-height: 32px;
}
.weather-sub {
    color: #c8c8c8;
}
.apps {
    display: flex;
    gap: 8.25px;
    margin-top: 8px;
}
.app {
    position: relative;
    width: 80px;
    height: 80px;
    border-radius: 10px;
    padding-top: 15px;
    display: flex;
    justify-content: center;
}
.app-edge {
    background: #442626;
}
.app-settings {
    background: #2e2e2e;
    border: 1px solid #383838;
}
.app-dot {
    position: absolute;
    left: 34px;
    bottom: 2px;
    width: 12px;
    height: 6px;
    border-radius: 3px;
    background: #9a9a9a;
}
.dot-edge {
    background: #ff8f9b;
}
.dot-active {
    left: 24px;
    width: 32px;
    background: #c5bde8;
}
.teams-t {
    font: bold 17px "Liberation Sans", sans-serif;
    fill: #fff;
    text-anchor: middle;
}
.app-tag {
    font: bold 11px "Liberation Sans", sans-serif;
    fill: #0b2a30;
    text-anchor: middle;
}
.cal-day {
    font: 15px "Liberation Sans", sans-serif;
    fill: #1a73e8;
    text-anchor: middle;
}
.tray {
    flex: 1;
    height: 96px;
    padding-right: 42px;
    display: flex;
    align-items: center;
    justify-content: flex-end;
    font-size: 23px;
}
.tray svg {
    flex: none;
}
.tray-sync { margin-left: 19px; }
.tray-lang { margin-left: 30px; }
.tray-wifi { margin-left: 38px; }
.tray-sound { margin-left: 16px; }
.tray-power { margin-left: 18px; }
.clock {
    margin-left: 28px;
    text-align: right;
    font-size: 22.5px;
    line-height: 32px;
}
.tray-moon { margin-left: 19px; }
```
